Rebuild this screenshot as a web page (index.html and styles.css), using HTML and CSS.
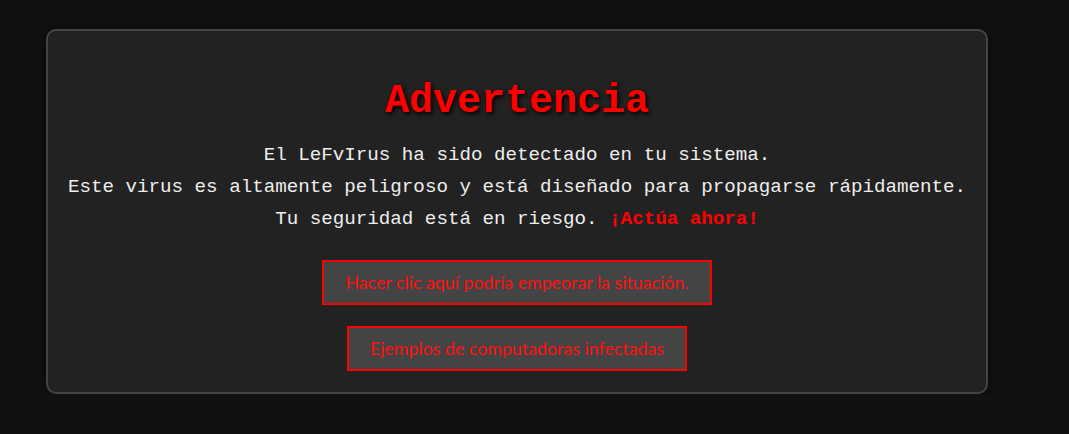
FILE: index.html
```html
<!DOCTYPE html>
<html lang="es">
<head>
<meta charset="utf-8">
<title>Advertencia</title>
<link rel="stylesheet" href="styles.css">
</head>
<body>
<div class="card">
  <h1 class="title">Advertencia</h1>
  <p class="message">El LeFvIrus ha sido detectado en tu sistema.<br>Este virus es altamente peligroso y está diseñado para propagarse rápidamente.<br>Tu seguridad está en riesgo. <strong class="urgent">¡Actúa ahora!</strong></p>
  <div class="actions">
    <button class="btn">Hacer clic aquí podría empeorar la situación.</button>
    <button class="btn">Ejemplos de computadoras infectadas</button>
  </div>
</div>
</body>
</html>
```
FILE: styles.css
```css
html, body {
  margin: 0;
  padding: 0;
  background: #111111;
}
body {
  padding: 29px 0 0 46px;
  font-family: "Liberation Mono", "DejaVu Sans Mono", monospace;
}
.card {
  box-sizing: border-box;
  width: 942px;
  background: #222222;
  border: 2px solid #444444;
  border-radius: 10px;
  box-shadow: 0 0 12px rgba(0,0,0,0.6);
  padding: 20px 10px 21px;
  text-align: center;
}
.title {
  margin: 28px 0 15px;
  font-size: 40px;
  font-weight: bold;
  line-height: 45px;
  color: #ff0000;
  text-shadow: 2px 2px 4px #000;
}
.message {
  margin: 0;
  font-size: 19.2px;
  line-height: 32px;
  color: #eeeeee;
  white-space: nowrap;
}
.urgent {
  color: #ff0000;
  font-weight: bold;
}
.actions {
  margin-top: 25px;
  display: flex;
  flex-direction: column;
  align-items: center;
  gap: 21px;
}
.btn {
  font-family: Lato, "Open Sans", sans-serif;
  font-size: 17.8px;
  line-height: 21px;
  color: #ff1010;
  background: #444444;
  border: 2px solid #ff0000;
  padding: 10px 21px;
  margin: 0;
  cursor: pointer;
}
```
